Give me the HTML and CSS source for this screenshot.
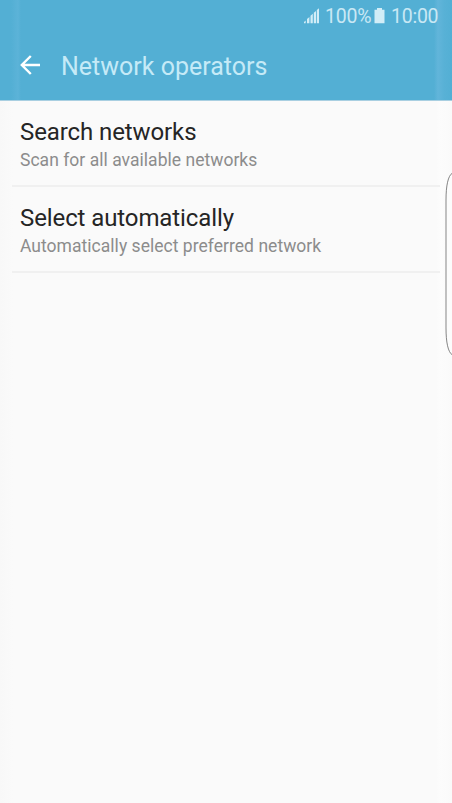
FILE: index.html
```html
<!DOCTYPE html>
<html lang="en">
<head>
<meta charset="utf-8">
<title>Network operators</title>
<link rel="stylesheet" href="styles.css">
</head>
<body>
<div class="screen">
  <header class="header">
    <div class="status">
      <svg class="signal" width="16" height="16" viewBox="0 0 16 16"><path d="M0 15.3V14l1.7-1.5v2.8zM3 15.3V11l2.4-2v6.3zM6.5 15.3V7.8l2.3-2v9.5zM9.8 15.3V4.7l2.2-1.8v12.4zM12.8 15.3V2L15 .3v15z"/></svg>
      <span class="percent">100%</span>
      <svg class="battery" width="11" height="16" viewBox="0 0 11 16"><path d="M3 0h5v1.8h2.5V15.3H.5V1.8H3z"/></svg>
      <span class="time">10:00</span>
    </div>
    <div class="bar">
      <svg class="back" width="21" height="20" viewBox="0 0 21 20"><path d="M10.8 1L1.8 10l9 9M2 10h18"/></svg>
      <h1 class="title">Network operators</h1>
    </div>
  </header>
  <main class="list">
    <section class="item">
      <h2 class="name">Search networks</h2>
      <p class="detail">Scan for all available networks</p>
    </section>
    <section class="item">
      <h2 class="name">Select automatically</h2>
      <p class="detail">Automatically select preferred network</p>
    </section>
  </main>
  <svg class="edge" width="7" height="184" viewBox="0 0 7 184"><path d="M7.5 1C3 3.5 1 14 1 28v128c0 14 2 24.5 6.5 27"/></svg>
</div>
</body>
</html>
```
FILE: styles.css
```css
* { box-sizing: border-box; }
body { margin: 0; }
.screen {
  position: relative;
  width: 452px;
  height: 803px;
  overflow: hidden;
  background: linear-gradient(90deg, #f8f8f8 0, #fafafa 13px, #fafafa 436px, #fcfcfc 441px, #fafafa 452px);
  font-family: Roboto, sans-serif;
}
.header {
  height: 101px;
  border-bottom: 1px solid #a9cfe1;
  background: linear-gradient(90deg, #53afd4 0, #53afd4 11px, #5cb3d8 18px, #53afd4 21px, #53afd4 434px, #62b5da 438px, #58b1d6 444px, #53afd4 452px);
}
.status {
  display: flex;
  align-items: center;
  height: 32px;
  padding-left: 304px;
  color: #c9e8f4;
  font-size: 19.5px;
  letter-spacing: -0.25px;
  line-height: 32px;
}
.status svg { margin-top: -1px; }
.status span { padding-top: 2px; line-height: 30px; }
.status path { fill: #d2edf7; }
.percent { width: 45px; margin-left: 5px; }
.battery { margin-left: 4px; }
.time { margin-left: 6px; }
.bar { display: flex; align-items: center; height: 68px; padding-left: 20px; }
.back { margin-top: -2px; }
.back path { fill: none; stroke: #fff; stroke-width: 2.4; }
.title {
  margin: 2px 0 0 20px;
  color: #c5eaf7;
  font-size: 25px;
  font-weight: 400;
  line-height: 32px;
}
.list { padding: 0 12px; }
.item { height: 86px; padding: 16px 0 0 8px; border-bottom: 2px solid #f0f0f0; }
.name {
  margin: 0;
  color: #252525;
  font-size: 24px;
  font-weight: 400;
  letter-spacing: -0.1px;
  line-height: 30px;
  white-space: nowrap;
}
.detail { margin: 1px 0 0; color: #8c8c8c; font-size: 17.5px; letter-spacing: 0.03px; line-height: 25px; white-space: nowrap; }
.edge { position: absolute; right: 0; top: 172px; }
.edge path { fill: #fcfcfc; stroke: #858585; stroke-width: 1; }
```
